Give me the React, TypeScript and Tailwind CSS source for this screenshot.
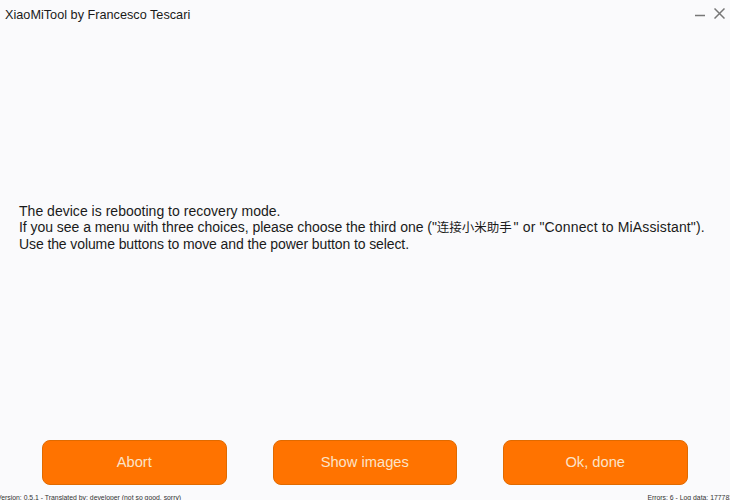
import React from 'react';

const actions = ['Abort', 'Show images', 'Ok, done'];

const App: React.FC = () => {
  return (
    <div className="flex flex-col h-[500px] w-[730px] overflow-hidden bg-[#fafafc] text-[#1a1a1a] font-['Liberation_Sans','Noto_Sans_CJK_SC',sans-serif]">
      {/* Title bar */}
      <div className="flex items-start justify-between h-[30px] pl-[5px] pr-[5px] pt-[7px]">
        <span className="text-[12.7px] leading-[16px]">XiaoMiTool by Francesco Tescari</span>
        <div className="flex items-start gap-[9px] text-[#777]">
          <svg width="10" height="12" viewBox="0 0 10 12">
            <path d="M0 8.5H10" stroke="currentColor" strokeWidth="1.5" fill="none" />
          </svg>
          <svg width="11" height="11" viewBox="0 0 11 11" className="mt-[1px]">
            <path d="M0.5 0.5L10.5 10.5M10.5 0.5L0.5 10.5" stroke="currentColor" strokeWidth="1.5" fill="none" />
          </svg>
        </div>
      </div>

      {/* Message */}
      <div className="flex-1 flex items-center pl-[19px]">
        <div className="text-[14px] leading-[16px] whitespace-nowrap mt-[-15px]">
          <p className="tracking-[0.02px]">The device is rebooting to recovery mode.</p>
          <p className="tracking-[-0.04px]">
            If you see a menu with three choices, please choose the third one ("
            <span className="text-[12.5px] mr-[2px]">连接小米助手</span>
            <span className="tracking-[0.14px]">" or "Connect to MiAssistant").</span>
          </p>
          <p className="tracking-[-0.1px]">Use the volume buttons to move and the power button to select.</p>
        </div>
      </div>

      {/* Actions */}
      <div className="flex gap-[46px] pl-[42px]">
        {actions.map((label) => (
          <button
            key={label}
            className="w-[184.5px] h-[45px] rounded-[8px] border border-[#e06a00] bg-[#ff7300] text-[14.7px] text-[#fbe3c8]"
          >
            {label}
          </button>
        ))}
      </div>

      {/* Footer */}
      <div className="flex items-start justify-between h-[15px] pt-[9px] text-[6.85px] leading-[8px] text-[#333] whitespace-nowrap">
        <span className="ml-[-3px]">Version: 0.5.1 - Translated by: developer (not so good, sorry)</span>
        <span className="mr-[-3px]">Errors: 6 - Log data: 177783</span>
      </div>
    </div>
  );
};

export default App;
